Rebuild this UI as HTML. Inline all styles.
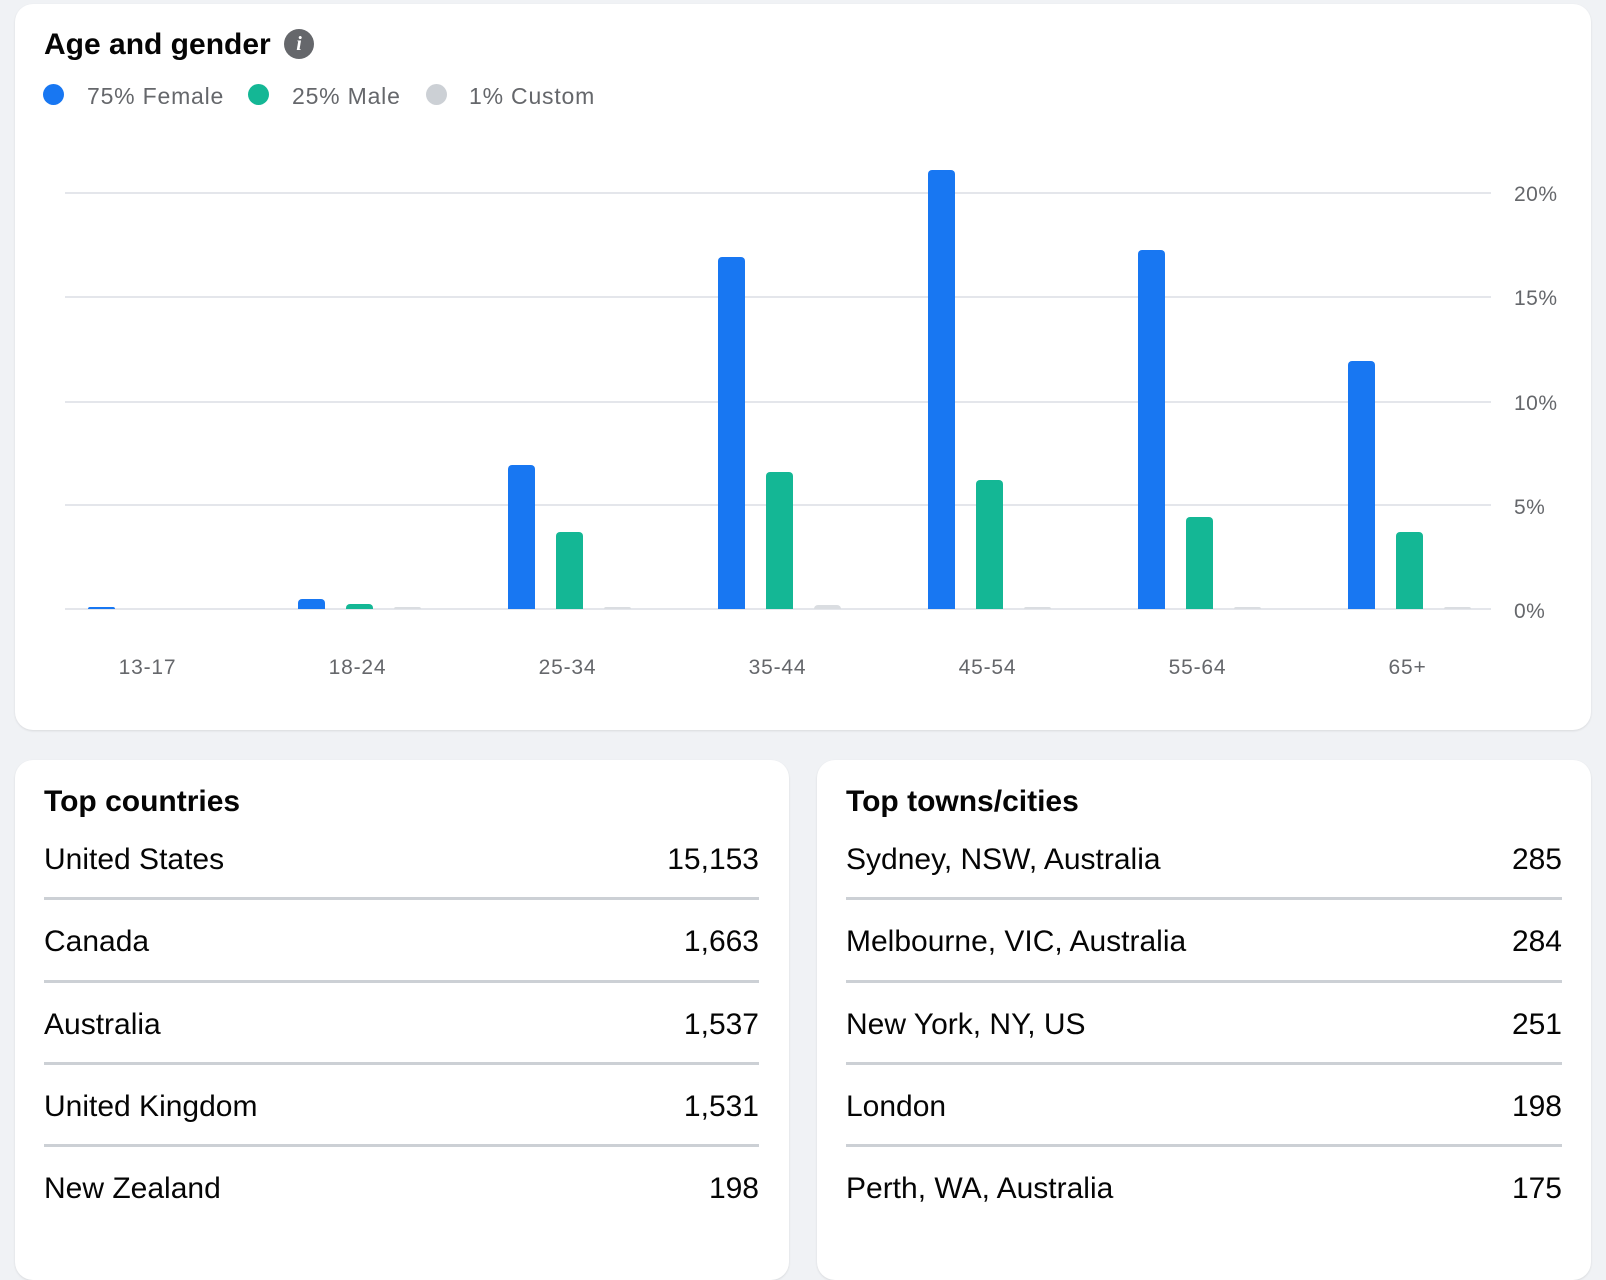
<!DOCTYPE html>
<html><head><style>
body{margin:0;width:1606px;height:1228px;background:#f0f2f5;font-family:"Liberation Sans",sans-serif;overflow:hidden;position:relative}
.card{position:absolute;background:#fff;border-radius:18px;box-shadow:0 1px 2px rgba(0,0,0,.1)}
.t{position:absolute;font-weight:bold;font-size:30px;color:#050505}
.lg{position:absolute;top:83px;font-size:23px;color:#65676b;letter-spacing:0.8px}
.dot{position:absolute;top:84px;width:21px;height:21px;border-radius:50%}
.grid{position:absolute;left:65px;width:1426px;height:2px;background:#e4e6eb}
.yl{position:absolute;left:1514px;font-size:21px;color:#65676b;letter-spacing:0.5px}
.xl{position:absolute;top:656px;width:100px;text-align:center;font-size:21px;color:#65676b;letter-spacing:0.8px}
.bar{position:absolute;width:27px;border-radius:4px 4px 0 0}
.row{position:absolute;font-size:30px;color:#050505;display:flex;justify-content:space-between}
.div{position:absolute;height:3px;background:#ccd0d5}
</style></head><body>
<div class="card" style="left:15px;top:4px;width:1576px;height:726px"></div>
<div class="t" style="left:44px;top:28px">Age and gender</div>
<div style="position:absolute;left:284px;top:29px;width:30px;height:30px;border-radius:50%;background:#65676b;color:#fff;font:italic bold 20px 'Liberation Serif',serif;text-align:center;line-height:30px">i</div>
<div class="dot" style="left:43px;background:#1877f2"></div><div class="lg" style="left:87px">75% Female</div>
<div class="dot" style="left:248px;background:#14b795"></div><div class="lg" style="left:292px">25% Male</div>
<div class="dot" style="left:426px;background:#ccd0d5"></div><div class="lg" style="left:469px">1% Custom</div>
<div class="grid" style="top:192px"></div><div class="grid" style="top:296px"></div><div class="grid" style="top:401px"></div><div class="grid" style="top:504px"></div><div class="grid" style="top:608px"></div>
<div class="yl" style="top:183px">20%</div><div class="yl" style="top:287px">15%</div><div class="yl" style="top:392px">10%</div><div class="yl" style="top:496px">5%</div><div class="yl" style="top:600px">0%</div>
<div id="bars"></div>
<script>
var cs=[147.5,357.5,567.5,777.5,987.5,1197.5,1407.5],lb=["13-17","18-24","25-34","35-44","45-54","55-64","65+"];
var d=[[0.05,0,0],[0.5,0.25,0.05],[6.9,3.7,0.1],[16.9,6.6,0.2],[21.1,6.2,0.1],[17.25,4.4,0.05],[11.9,3.7,0.05]];
var col=["#1877f2","#14b795","#dadde1"],off=[-60,-12,36],h="";
for(var i=0;i<7;i++){h+='<div class="xl" style="left:'+(cs[i]-50)+'px">'+lb[i]+'</div>';
for(var j=0;j<3;j++){var v=d[i][j];if(!v)continue;var ht=Math.max(2,v*20.8);
h+='<div class="bar" style="left:'+(cs[i]+off[j])+'px;top:'+(609-ht)+'px;height:'+ht+'px;background:'+col[j]+'"></div>';}}
document.getElementById('bars').innerHTML=h;
</script>
<div class="card" style="left:15px;top:760px;width:774px;height:520px"></div>
<div class="card" style="left:817px;top:760px;width:774px;height:520px"></div>
<div class="t" style="left:44px;top:785px">Top countries</div>
<div class="t" style="left:846px;top:785px">Top towns/cities</div>
<div class="row" style="left:44px;width:715px;top:843px"><span>United States</span><span>15,153</span></div>
<div class="row" style="left:44px;width:715px;top:925px"><span>Canada</span><span>1,663</span></div>
<div class="row" style="left:44px;width:715px;top:1008px"><span>Australia</span><span>1,537</span></div>
<div class="row" style="left:44px;width:715px;top:1090px"><span>United Kingdom</span><span>1,531</span></div>
<div class="row" style="left:44px;width:715px;top:1172px"><span>New Zealand</span><span>198</span></div>
<div class="row" style="left:846px;width:716px;top:843px"><span>Sydney, NSW, Australia</span><span>285</span></div>
<div class="row" style="left:846px;width:716px;top:925px"><span>Melbourne, VIC, Australia</span><span>284</span></div>
<div class="row" style="left:846px;width:716px;top:1008px"><span>New York, NY, US</span><span>251</span></div>
<div class="row" style="left:846px;width:716px;top:1090px"><span>London</span><span>198</span></div>
<div class="row" style="left:846px;width:716px;top:1172px"><span>Perth, WA, Australia</span><span>175</span></div>
<div class="div" style="left:44px;width:715px;top:897px"></div><div class="div" style="left:44px;width:715px;top:980px"></div><div class="div" style="left:44px;width:715px;top:1062px"></div><div class="div" style="left:44px;width:715px;top:1144px"></div>
<div class="div" style="left:846px;width:716px;top:897px"></div><div class="div" style="left:846px;width:716px;top:980px"></div><div class="div" style="left:846px;width:716px;top:1062px"></div><div class="div" style="left:846px;width:716px;top:1144px"></div>
</body></html>
